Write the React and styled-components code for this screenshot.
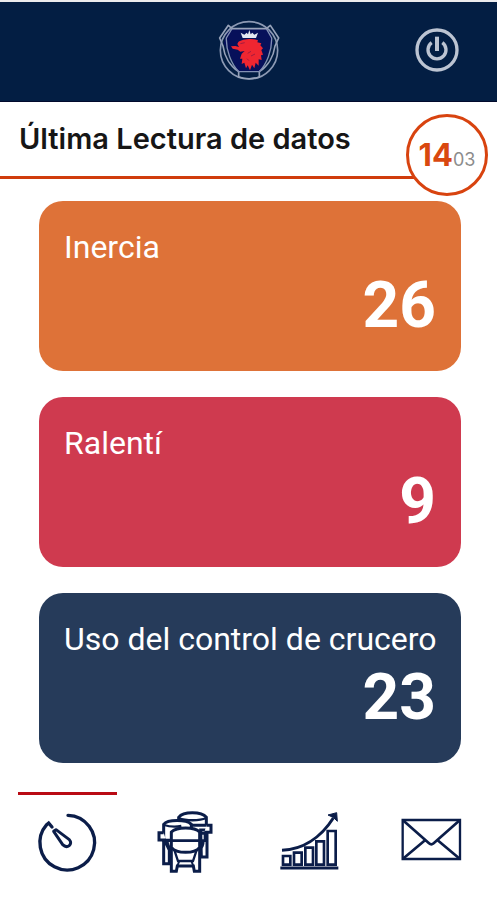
import React, { useState } from 'react'
import styled, { createGlobalStyle } from 'styled-components'

const GlobalStyle = createGlobalStyle`
  * {
    box-sizing: border-box;
  }

  body {
    margin: 0;
    background: #fff;
    font-family: Roboto, 'Liberation Sans', sans-serif;
  }

  button {
    padding: 0;
    border: 0;
    background: none;
    cursor: pointer;
  }

  svg {
    display: block;
  }
`;

const Page = styled.div`
  display: flex;
  flex-direction: column;
  min-height: 100vh;
`;

const Header = styled.header`
  display: grid;
  grid-template-columns: 1fr auto 1fr;
  align-items: center;
  height: 102px;
  padding: 0 38px 4px;
  border-top: 2px solid #ececee;
  border-bottom: 1px solid #020a2c;
  background: #031e43;
`;

const Brand = styled.div`
  grid-column: 2;
`;

const PowerButton = styled.button`
  justify-self: end;
`;

const TitleBar = styled.div`
  position: relative;
  margin-right: 50px;
  padding: 20px 0 20px 19px;
  border-bottom: 3px solid #d03c0c;
`;

const Title = styled.h1`
  margin: 0;
  color: #161616;
  font-family: Inter, 'Liberation Sans', sans-serif;
  font-size: 29px;
  line-height: 34px;
  font-weight: 600;
  white-space: nowrap;
`;

const DateBadge = styled.div`
  position: absolute;
  top: 12px;
  right: -41px;
  display: flex;
  justify-content: center;
  align-items: baseline;
  width: 82px;
  height: 82px;
  border: 3px solid #d8430f;
  border-radius: 50%;
  background: #fff;
  font-family: Inter, 'Liberation Sans', sans-serif;
  line-height: 76px;
`;

const Day = styled.span`
  color: #d9480f;
  font-size: 31px;
  font-weight: 700;
`;

const Month = styled.span`
  color: #8c8c8c;
  font-size: 18px;
`;

const CardList = styled.main`
  display: flex;
  flex-direction: column;
  row-gap: 26px;
  padding: 22px 36px 29px 39px;
`;

const Card = styled.section`
  padding: 26px 25px 29px;
  border-radius: 24px;
  color: #fff;
  background: ${({ $color }) => $color};
`;

const CardLabel = styled.h2`
  margin: 0 0 3px;
  font-size: 32px;
  line-height: 40px;
  font-weight: 400;
  white-space: nowrap;
`;

const CardValue = styled.p`
  margin: 0;
  font-size: 64px;
  line-height: 72px;
  font-weight: 700;
  text-align: right;
`;

const TabBar = styled.nav`
  display: grid;
  grid-template-columns: repeat(4, 1fr);
  padding: 0 5px 0 7px;
`;

const Tab = styled.button`
  display: flex;
  flex-direction: column;
  align-items: center;
  row-gap: 15px;
  padding: 0 11px;

  &::before {
    content: '';
    width: 100%;
    height: 3px;
    background: ${({ $active }) => ($active ? '#b90a14' : 'transparent')};
  }
`;

const TabIcon = styled.svg`
  width: 65px;
  height: 65px;
  fill: none;
  stroke: #0b1d49;
  stroke-width: 9;
`;

const Logo = () => (
  <svg width="64" height="64" viewBox="49 52 192 192" fill="none" role="img" aria-label="Scania">
    <path d="M82 85 H208 L217 128 L180 212 H112 L69 128 Z" fill="#07105a" />
    <g stroke="#98a3ba" strokeWidth="5" strokeLinejoin="round">
      <circle cx="145" cy="149" r="86" stroke="#8d9ab4" />
      <path d="M94 84 L83 74 L57 112 L67 136 C71 166 88 196 114 213 V229 C135 236 156 236 176 229 V213 C202 196 219 166 223 136 L234 112 L209 74 L197 84 Z" />
      <path d="M94 84 L77 112 C76 150 92 190 114 213 H176 C198 190 214 150 213 112 L197 84" stroke="#8391b4" strokeWidth="4" />
    </g>
    <path d="M120 96 L131 102 L138 96 L142 101 L146 88 L150 101 L155 96 L161 102 L172 96 L166 112 H126 Z" fill="#e4e8f2" />
    <path
      d="M113 124 C124 115 158 112 172 119 L170 125 L182 128 L179 134 L187 143 L182 148 L187 162 L181 164 L183 178 L174 176 L174 195 L165 186 L161 203 L154 192 L148 209 L141 194 L136 203 L131 186 L123 190 L125 174 L118 174 L123 159 L132 151 L119 153 L111 147 L96 144 L91 137 L104 136 L115 139 L110 130 Z"
      fill="#ef2631"
    />
    <path d="M119 129 L132 126 M141 158 L151 152 M151 166 L163 160 M139 174 L145 180" stroke="#a31c3f" strokeWidth="3" />
  </svg>
);

const PowerIcon = () => (
  <svg width="44" height="44" viewBox="45 51 132 132" fill="none" stroke="#bcc4d2" strokeWidth="9">
    <circle cx="111" cy="117" r="60" strokeWidth="10" />
    <path d="M95 95 A27 27 0 1 0 127 95" strokeWidth="10" />
    <path d="M111 77 V120" strokeWidth="12" />
  </svg>
);

const DialIcon = () => (
  <TabIcon viewBox="105 90 195 195" strokeLinecap="round">
    <path d="M204 106 A82 82 0 1 1 140 134 L146 129 L156 141" strokeWidth="10" />
    <path d="M161 154 L168 149 L208 179 C220 192 202 208 188 194 Z" strokeLinejoin="round" />
  </TabIcon>
);

const TrucksIcon = () => (
  <TabIcon viewBox="50 60 195 195">
    <g fill="#fff">
      <path d="M184 120 H203 V201 H186 Z" />
      <path d="M118 106 V82 C132 64 186 64 201 82 V106 Z" />
      <path d="M201 106 H215 V127 H195" />
      <path d="M118 84 C140 93 180 93 201 84" strokeWidth="7" />
      <path d="M73 145 V221 H90 V180 Z" />
      <path d="M73 151 V103 C85 88 141 88 156 103 V151 Z" />
      <path d="M73 128 H59 V150 H80" />
      <path d="M74 105 C92 111 110 111 126 108" strokeWidth="7" />
      <path d="M96 165 V244 H111 L114 228 H162 L165 244 H181 V165 Z" />
      <path d="M105 180 L116 213 H161 L172 180" strokeWidth="7" />
      <path d="M114 228 L120 213 M162 228 L156 213" strokeWidth="6" />
      <path d="M96 126 C112 110 166 110 181 126 V172 C166 192 112 192 96 172 Z" />
    </g>
    <path d="M78 152 H197 V130 H183 M84 152 C84 165 88 172 96 176 M192 152 C192 165 189 172 181 176" strokeWidth="8" />
  </TabIcon>
);

const ChartIcon = () => (
  <TabIcon viewBox="38 60 195 195">
    <path d="M45 234 H219" />
    <path d="M53 198 H75 V224 H53 Z M86 188 H109 V224 H86 Z M120 173 H143 V224 H120 Z M153 154 H176 V224 H153 Z M187 123 H211 V224 H187 Z" strokeWidth="8" />
    <path d="M50 181 C108 178 164 147 204 84" />
    <path d="M188 75 L214 68 L216 94 L205 83 Z" fill="#0b1d49" strokeWidth="3" />
  </TabIcon>
);

const MailIcon = () => (
  <TabIcon viewBox="56 60 195 195" strokeWidth="8">
    <path d="M67 90 H239 V207 H67 Z" strokeWidth="7" />
    <path d="M67 90 L146 160 Q153 166 160 160 L239 90 M67 207 L135 150 M239 207 L171 150" strokeWidth="8" />
  </TabIcon>
);

const cards = [
  { label: 'Inercia', value: 26, color: '#de7238' },
  { label: 'Ralentí', value: 9, color: '#cf3a4f' },
  { label: 'Uso del control de crucero', value: 23, color: '#263b5a' },
];

const tabs = [
  { name: 'Lectura', Icon: DialIcon },
  { name: 'Vehículos', Icon: TrucksIcon },
  { name: 'Evolución', Icon: ChartIcon },
  { name: 'Mensajes', Icon: MailIcon },
];

const App = () => {
  const [activeTab, setActiveTab] = useState('Lectura');

  return (
    <Page>
      <GlobalStyle />
      <Header>
        <Brand>
          <Logo />
        </Brand>
        <PowerButton type="button" aria-label="Salir">
          <PowerIcon />
        </PowerButton>
      </Header>

      <TitleBar>
        <Title>Última Lectura de datos</Title>
        <DateBadge>
          <Day>14</Day>
          <Month>03</Month>
        </DateBadge>
      </TitleBar>

      <CardList>
        {cards.map(({ label, value, color }) => (
          <Card key={label} $color={color}>
            <CardLabel>{label}</CardLabel>
            <CardValue>{value}</CardValue>
          </Card>
        ))}
      </CardList>

      <TabBar>
        {tabs.map(({ name, Icon }) => (
          <Tab
            key={name}
            type="button"
            aria-label={name}
            $active={name === activeTab}
            onClick={() => setActiveTab(name)}
          >
            <Icon />
          </Tab>
        ))}
      </TabBar>
    </Page>
  )
}

export default App
